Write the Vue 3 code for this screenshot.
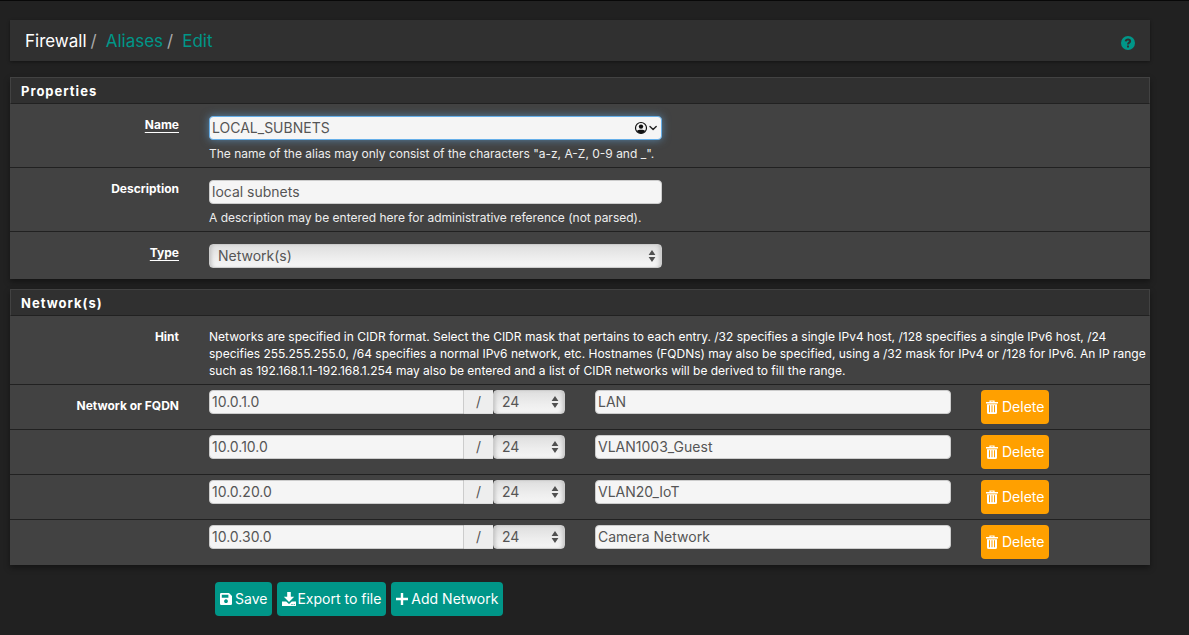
<script setup>
import { ref } from 'vue'

const name = ref('LOCAL_SUBNETS')
const description = ref('local subnets')
const type = ref('Network(s)')
const networks = ref([
  { address: '10.0.1.0', mask: '24', description: 'LAN' },
  { address: '10.0.10.0', mask: '24', description: 'VLAN1003_Guest' },
  { address: '10.0.20.0', mask: '24', description: 'VLAN20_IoT' },
  { address: '10.0.30.0', mask: '24', description: 'Camera Network' },
])

function addNetwork() {
  networks.value.push({ address: '', mask: '24', description: '' })
}
</script>

<template>
  <main class="page">
    <header class="header">
      <nav class="crumbs" aria-label="Breadcrumb">
        <span class="current">Firewall</span><i>/</i>
        <a href="#aliases">Aliases</a><i>/</i>
        <a href="#edit">Edit</a>
      </nav>
      <a class="help-link" href="#help" aria-label="Help">
        <svg viewBox="0 0 14 14" width="14" height="14">
          <circle cx="7" cy="7" r="7" fill="#009688" />
          <path d="M4.7 5.4C4.9 3.9 5.8 3.5 7 3.5s2.1.6 2.1 1.7c0 1.4-2.1 1.5-2.1 3.2" fill="none" stroke="#303030" stroke-width="2" />
          <path d="M6 9.4h2v2H6z" fill="#303030" />
        </svg>
      </a>
    </header>

    <form @submit.prevent>
      <section class="panel">
        <h2>Properties</h2>
        <div class="row">
          <label class="label required" for="name">Name</label>
          <div class="field five">
            <div class="control focused">
              <input id="name" v-model="name" type="text" />
              <svg class="autofill" viewBox="0 0 24 14" width="24" height="14">
                <circle cx="7" cy="7" r="5.5" fill="none" stroke="#111" stroke-width="1.2" />
                <circle cx="7" cy="5.6" r="2.2" fill="#111" />
                <path d="M2.8 10.1C4 8.2 10 8.2 11.2 10.1C9.2 13.2 4.8 13.2 2.8 10.1z" fill="#111" />
                <path d="M16 5.6l3.1 3 3.1-3" fill="none" stroke="#222" stroke-width="1.4" stroke-linecap="round" stroke-linejoin="round" />
              </svg>
            </div>
            <p class="note">The name of the alias may only consist of the characters "a-z, A-Z, 0-9 and _".</p>
          </div>
        </div>
        <div class="row">
          <label class="label" for="description">Description</label>
          <div class="field five">
            <input id="description" v-model="description" type="text" />
            <p class="note">A description may be entered here for administrative reference (not parsed).</p>
          </div>
        </div>
        <div class="row">
          <label class="label required" for="type">Type</label>
          <div class="field five">
            <div class="control">
              <select id="type" v-model="type"><option>Network(s)</option></select>
              <svg class="arrows" viewBox="0 0 8 14" width="8" height="14"><path d="M4 1l3.4 5H.6zM4 13L.6 8h6.8z" fill="#505050" /></svg>
            </div>
          </div>
        </div>
      </section>

      <section class="panel">
        <h2>Network(s)</h2>
        <div class="row">
          <span class="label">Hint</span>
          <div class="field ten">
            <p class="hint">Networks are specified in CIDR format. Select the CIDR mask that pertains to each entry. /32 specifies a single IPv4 host, /128 specifies a single IPv6 host, /24 specifies 255.255.255.0, /64 specifies a normal IPv6 network, etc. Hostnames (FQDNs) may also be specified, using a /32 mask for IPv4 or /128 for IPv6. An IP range such as 192.168.1.1-192.168.1.254 may also be entered and a list of CIDR networks will be derived to fill the range.</p>
          </div>
        </div>
        <div v-for="(network, i) in networks" :key="i" class="row network">
          <label class="label" :for="'address' + i">{{ i === 0 ? 'Network or FQDN' : '' }}</label>
          <div class="field four group">
            <input :id="'address' + i" v-model="network.address" class="address" type="text" :aria-label="'Network ' + (i + 1)" />
            <span class="slash">/</span>
            <div class="control mask">
              <select v-model="network.mask" :aria-label="'Mask ' + (i + 1)"><option>24</option></select>
              <svg class="arrows" viewBox="0 0 8 14" width="8" height="14"><path d="M4 1l3.4 5H.6zM4 13L.6 8h6.8z" fill="#505050" /></svg>
            </div>
          </div>
          <div class="field four">
            <input v-model="network.description" type="text" :aria-label="'Description ' + (i + 1)" />
          </div>
          <div class="field two">
            <button class="btn delete" type="button" @click="networks.splice(i, 1)">
              <svg viewBox="0 0 12 14" width="12" height="14">
                <path d="M0 2h12v1.5H0zM3.4 2.4V.4h5.2v2H7.3v-.8H4.7v.8z" fill="#fff" />
                <path fill-rule="evenodd" d="M1 4.2h10V12.4Q11 14 9.4 14H2.6Q1 14 1 12.4zM3 5.3v7h1v-7zM5.5 5.3v7h1v-7zM8 5.3v7h1v-7z" fill="#fff" />
              </svg>
              Delete
            </button>
          </div>
        </div>
      </section>

      <div class="actions">
        <button class="btn" type="submit">
          <svg viewBox="0 0 12 12" width="12" height="12">
            <path fill-rule="evenodd" d="M1.2 0H9l3 3v7.8q0 1.2-1.2 1.2H1.2Q0 12 0 10.8V1.2Q0 0 1.2 0zM1.8 1.8v3h6.6v-3zM6 6.3a1.9 1.9 0 1 0 .01 0z" fill="#fff" />
          </svg>
          Save
        </button>
        <button class="btn tight" type="button">
          <svg viewBox="0 0 14 14" width="14" height="14">
            <path d="M5.2 0h3.6v4.8h3.4L7 10 1.8 4.8h3.4z" fill="#fff" />
            <path fill-rule="evenodd" d="M0 9.5h4.2L7 12l2.8-2.5H14V14H0zM9.5 12v.9h1V12zM11.7 12v.9h1V12z" fill="#fff" />
          </svg>
          Export to file
        </button>
        <button class="btn" type="button" @click="addNetwork">
          <svg viewBox="0 0 12 12" width="12" height="12"><path d="M4.8 0h2.4v4.8H12v2.4H7.2V12H4.8V7.2H0V4.8h4.8z" fill="#fff" /></svg>
          Add Network
        </button>
      </div>
    </form>
  </main>
</template>

<style>
body {
  background: #212121;
}
</style>

<style scoped>
* {
  box-sizing: border-box;
}
.page {
  padding: 19px 39px 16px 10px;
  border-top: 1px solid #080808;
  color: #fff;
  font-family: Inter, "Liberation Sans", sans-serif;
  font-size: 12px;
  line-height: 17px;
}
.header {
  display: flex;
  align-items: center;
  justify-content: space-between;
  height: 41px;
  margin-bottom: 16px;
  padding: 0 15px;
  background: #303030;
  box-shadow: 0 1px 3px rgba(0, 0, 0, 0.4);
}
.crumbs {
  display: flex;
  font-size: 17px;
  line-height: 24px;
}
.crumbs i {
  margin: 0 9px 0 4px;
  color: #aaa;
  font-style: normal;
}
.crumbs a {
  color: #009688;
  text-decoration: none;
}
.help-link {
  display: flex;
  padding: 5px 0 1px;
}
.panel {
  margin-bottom: 10px;
  overflow: hidden;
  background: #424242;
  box-shadow: 0 3px 6px rgba(0, 0, 0, 0.4);
}
.panel h2 {
  height: 27px;
  margin: 0;
  padding: 0 10px;
  border: 1px solid #424242;
  border-bottom-color: #212121;
  background: #303030;
  font-size: 13px;
  font-weight: 700;
  line-height: 26px;
  letter-spacing: 1px;
}
.row {
  display: flex;
  margin: 0 -9px;
  padding: 12px 0 5px;
  border-bottom: 1px solid #212121;
}
.row:last-child {
  padding-bottom: 11px;
  border-bottom: 0;
}
.label {
  width: 16.6667%;
  padding: 0 15px;
  font-weight: 700;
  text-align: right;
}
.required {
  text-decoration: underline;
  text-underline-offset: 3px;
}
.field {
  padding: 0 15px;
}
.two {
  width: 16.6667%;
}
.four {
  width: 33.3333%;
}
.five {
  width: 41.6667%;
}
.ten {
  width: 83.3333%;
  padding-right: 9px;
}
.control {
  position: relative;
}
input,
select {
  display: block;
  width: 100%;
  height: 24px;
  margin: 0;
  border: 1px solid #ccc;
  border-radius: 4px;
  outline: 0;
  background: #f5f5f5;
  color: #555;
  font: 14px/20px Inter, "Liberation Sans", sans-serif;
}
input {
  padding: 0 2px 2px;
}
select {
  padding: 0 8px;
  appearance: none;
  background: linear-gradient(#dedede, #eee 60%, #f5f5f5);
  box-shadow: inset 4px 0 4px -3px #bbb, inset -4px 0 4px -3px #bbb;
}
.focused input {
  border-color: #66afe9;
  box-shadow: 0 0 8px rgba(102, 175, 233, 0.6);
}
.autofill {
  position: absolute;
  top: 5px;
  right: 4px;
}
.arrows {
  position: absolute;
  top: 5px;
  right: 6px;
  pointer-events: none;
}
.note {
  margin: 5px 0 0;
  color: #eee;
  white-space: nowrap;
}
.hint {
  margin: 0;
}
.network {
  padding: 5px 0;
}
.network:last-child {
  padding: 5px 0 6px;
}
.network .label {
  padding-top: 7px;
}
.group {
  display: flex;
}
.address {
  flex: 1;
  min-width: 0;
  border-radius: 4px 0 0 4px;
}
.slash {
  width: 29px;
  height: 24px;
  border: 1px solid #ddd;
  border-width: 1px 0;
  background: #eee;
  color: #555;
  font-size: 14px;
  line-height: 22px;
  text-align: center;
}
.mask {
  width: 72px;
}
.btn {
  display: flex;
  align-items: center;
  gap: 3px;
  height: 34px;
  padding: 0 5px;
  border: 0;
  border-radius: 4px;
  background: #009688;
  color: #fff;
  font: 400 14px/20px Inter, "Liberation Sans", sans-serif;
  white-space: nowrap;
}
.tight {
  gap: 1px;
}
.delete {
  gap: 4px;
  background: #ffa000;
}
.actions {
  display: flex;
  gap: 5px;
  margin-top: 17px;
  padding-left: 205px;
}
</style>
